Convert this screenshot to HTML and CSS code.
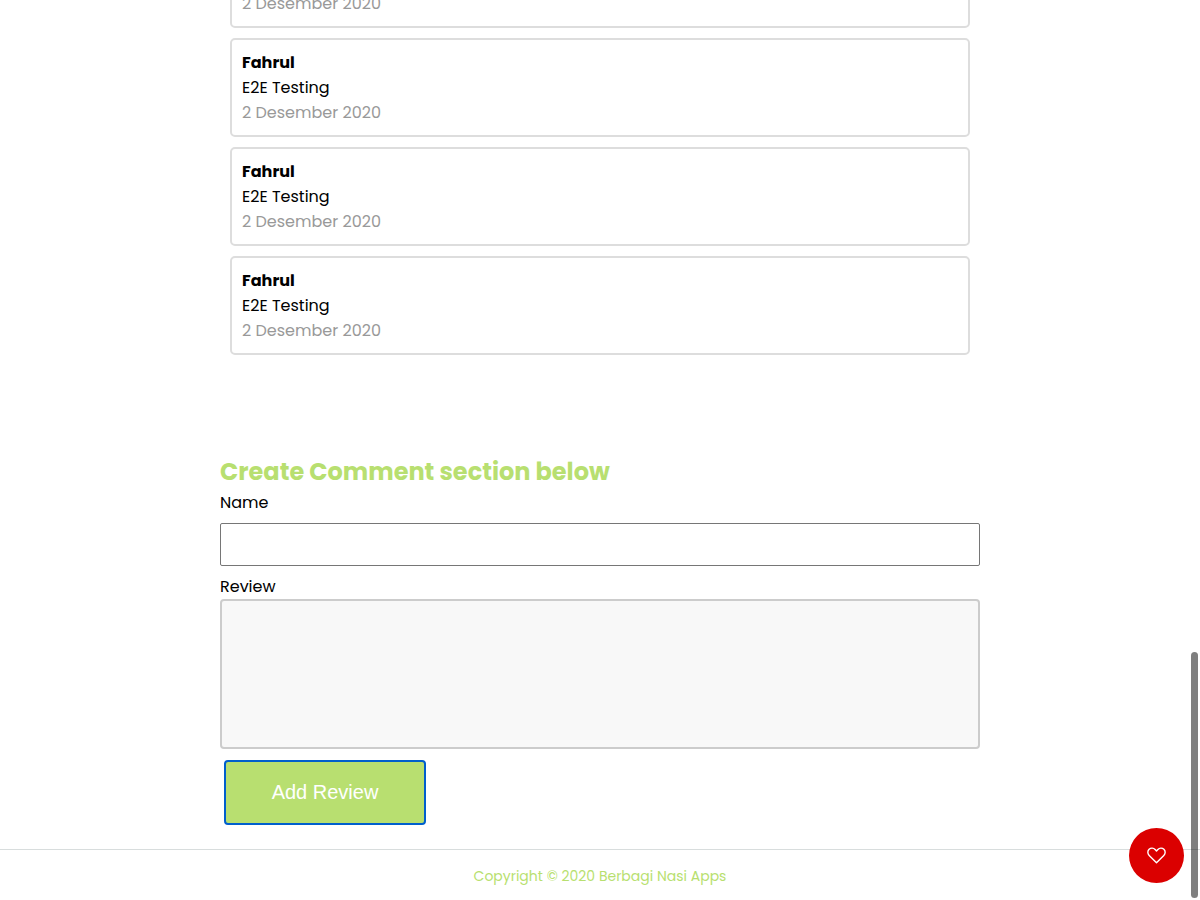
FILE: index.html
```html
<!DOCTYPE html>
<html lang="id">
<head>
<meta charset="utf-8">
<meta name="viewport" content="width=device-width, initial-scale=1">
<title>Berbagi Nasi Apps</title>
<link rel="stylesheet" href="styles.css">
</head>
<body>
<main class="content">
  <section class="reviews">
    <article class="review"><h3 class="review-name">Fahrul</h3><p class="review-text">E2E Testing</p><p class="review-date">2 Desember 2020</p></article>
    <article class="review"><h3 class="review-name">Fahrul</h3><p class="review-text">E2E Testing</p><p class="review-date">2 Desember 2020</p></article>
    <article class="review"><h3 class="review-name">Fahrul</h3><p class="review-text">E2E Testing</p><p class="review-date">2 Desember 2020</p></article>
    <article class="review"><h3 class="review-name">Fahrul</h3><p class="review-text">E2E Testing</p><p class="review-date">2 Desember 2020</p></article>
  </section>
  <form class="review-form">
    <h2 class="form-title">Create Comment section below</h2>
    <label class="form-label" for="name">Name</label>
    <input class="form-input" id="name" type="text">
    <label class="form-label" for="review">Review</label>
    <textarea class="form-textarea" id="review"></textarea>
    <button class="form-button" type="button">Add Review</button>
  </form>
</main>
<footer class="footer">Copyright © 2020 Berbagi Nasi Apps</footer>
<button class="like" type="button" aria-label="Like">
  <svg class="like-icon" viewBox="0 0 19 17" aria-hidden="true"><path d="M9.5 15.8 L2.2 8.5 C0.4 6.7 0.4 3.9 2.1 2.3 C3.8 0.7 6.5 0.8 8.1 2.5 L9.5 4 L10.9 2.5 C12.5 0.8 15.2 0.7 16.9 2.3 C18.6 3.9 18.6 6.7 16.8 8.5 Z"/></svg>
</button>
<div class="scroll-thumb"></div>
</body>
</html>
```
FILE: styles.css
```css
* {
  box-sizing: border-box;
  margin: 0;
  padding: 0;
}

/* The page is shown scrolled to its end: overflow is clipped at the top. */
body {
  display: flex;
  flex-direction: column;
  justify-content: flex-end;
  height: 100vh;
  overflow: hidden;
  background: #fff;
  color: #000;
  font-family: Poppins, Inter, sans-serif;
  font-size: 16px;
  line-height: 25px;
}

.content {
  flex-shrink: 0;
  width: 100%;
  max-width: 760px;
  margin: 0 auto;
}

.reviews {
  display: flex;
  flex-direction: column;
  gap: 10px;
  padding: 0 10px;
}

.review {
  padding: 10px;
  border: 2px solid #ddd;
  border-radius: 5px;
}

.review-name {
  font-size: 16px;
  font-weight: 700;
}

.review-date {
  color: #999;
}

.review-form {
  display: flex;
  flex-direction: column;
  margin-top: 99px;
  padding-bottom: 24px;
}

.form-title {
  color: #b8df70;
  font-size: 24px;
  font-weight: 700;
  line-height: 36px;
}

.form-input {
  height: 43px;
  margin: 8px 0;
  padding: 0 12px;
  border: 1px solid #767676;
  border-radius: 2px;
  font: inherit;
}

.form-textarea {
  height: 150px;
  padding: 12px 20px;
  border: 2px solid #ccc;
  border-radius: 4px;
  background: #f8f8f8;
  font: inherit;
  resize: none;
}

.form-button {
  align-self: flex-start;
  width: 202px;
  height: 65px;
  margin: 11px 4px 0;
  border: 2px solid #005fcc;
  border-radius: 4px;
  background: #b8df70;
  color: #fff;
  font-family: "Liberation Sans", Arial, sans-serif;
  font-size: 20px;
}

.footer {
  flex-shrink: 0;
  padding: 14px 16px 11px;
  border-top: 1px solid #d8dddd;
  color: #b8df70;
  font-size: 14px;
  text-align: center;
}

.like {
  position: fixed;
  right: 16px;
  bottom: 17px;
  display: flex;
  align-items: center;
  justify-content: center;
  width: 55px;
  height: 55px;
  border: 0;
  border-radius: 50%;
  background: #db0000;
}

.like-icon {
  width: 19px;
  height: 17px;
  fill: none;
  stroke: #fff;
  stroke-width: 1.4;
  stroke-linejoin: round;
}

.scroll-thumb {
  position: fixed;
  right: 2px;
  bottom: 2px;
  width: 7px;
  height: 246px;
  border-radius: 4px;
  background: rgba(0, 0, 0, 0.5);
}
```
